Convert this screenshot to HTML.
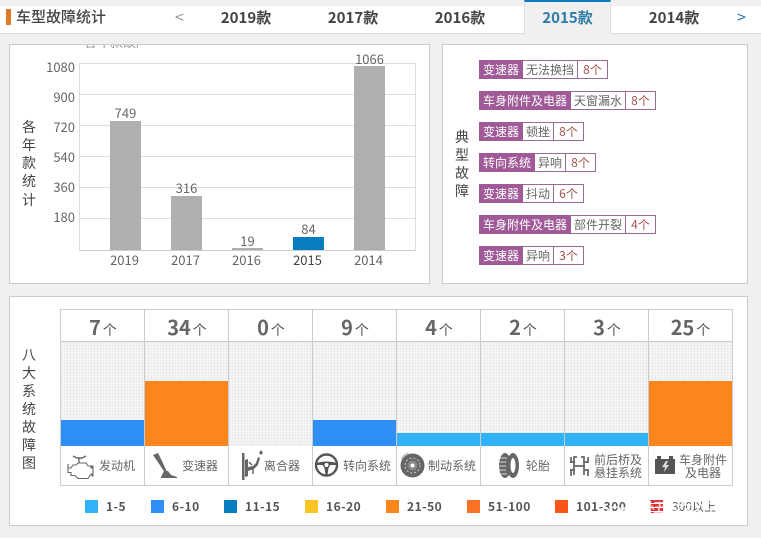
<!DOCTYPE html>
<html><head><meta charset="utf-8"><style>
html,body{margin:0;padding:0}
body{width:761px;height:541px;overflow:hidden;background:#f0f0f0;position:relative;font-family:"Noto Sans CJK SC","Liberation Sans",sans-serif;color:#555}
div,span.a{position:absolute;box-sizing:border-box}
.tab{top:6px;height:27px;line-height:23px;font-size:15px;font-weight:700;color:#444;text-align:center;width:86px}
.panel{background:#fff;border:1px solid #ccc}
.g{left:79px;width:337px;height:1px;background:#ddd}
.yl{left:35px;width:40px;text-align:right;font-size:13px;line-height:14px;color:#666}
.bar{width:31px;background:#b0aeb0}
.v{width:61px;text-align:center;font-size:13px;line-height:14px;color:#666}
.vt{font-size:14px;line-height:18px;width:16px;text-align:center;color:#444}
.tg{left:479px;height:19px;display:flex;font-size:12px;line-height:18px;white-space:nowrap;color:#666}
.tg span{box-sizing:border-box;display:block;height:19px;text-align:center;border:1px solid #9a6a94;border-left:0;background:#fff}
.tg span.p{background:#a05a98;color:#fff;border:0;line-height:19px}
.tg span.n{color:#a5504e}
.hc{top:309px;height:33px;width:85px;border:1px solid #ccc;border-right:0;background:#fff;text-align:center;font-size:20px;font-weight:700;line-height:33px;color:#666}
.hc i{font-style:normal;font-weight:400;font-size:14px;color:#555;margin-left:2px}
.cc{top:342px;height:104px;width:84px;border-left:1px solid #ccc;background-color:#f7f7f7;background-image:linear-gradient(#ececec 1px,transparent 1px),linear-gradient(90deg,#ececec 1px,transparent 1px);background-size:3px 3px}
.b{left:0;right:0;bottom:0}
.ic{top:446px;height:40px;width:85px;border:1px solid #ccc;border-top:0;border-right:0;background:#fff}
.il{font-size:12px;line-height:13px;color:#666;text-align:center;white-space:nowrap}
.sq{top:500px;width:13px;height:13px}
.lg{top:499px;font-size:12px;line-height:15px;font-weight:700;color:#555;letter-spacing:.5px;white-space:nowrap}
svg{position:absolute;overflow:visible}
</style></head><body>
<div style="left:0;top:6px;width:761px;height:28px;background:#fff;border-bottom:1px solid #ddd"></div>
<div style="left:6px;top:9px;width:5px;height:16px;background:#e07b28"></div>
<div style="left:16px;top:6px;font-size:15px;line-height:22px;font-weight:500;color:#444;white-space:nowrap">车型故障统计</div>
<div style="left:175px;top:5px;font-size:16px;line-height:22px;color:#999">&lt;</div>
<div class="tab" style="left:203px">2019款</div>
<div class="tab" style="left:310px">2017款</div>
<div class="tab" style="left:417px">2016款</div>
<div style="left:524px;top:0;width:87px;height:34px;background:#f0f0f0;border-left:1px solid #ddd;border-right:1px solid #ddd;border-top:2px solid #0a7cc0"></div>
<div class="tab" style="left:524px;color:#2d7ca8;width:87px">2015款</div>
<div class="tab" style="left:631px">2014款</div>
<div style="left:737px;top:5px;font-size:16px;line-height:22px;color:#2d7ca8">&gt;</div>

<div class="panel" style="left:9px;top:44px;width:421px;height:240px"></div>
<div class="panel" style="left:442px;top:44px;width:306px;height:240px"></div>
<div class="panel" style="left:9px;top:296px;width:739px;height:230px"></div>
<div style="left:84px;top:45px;width:56px;height:3px;overflow:hidden;color:#999;font-size:13px;line-height:3px;white-space:nowrap"><div style="left:0;top:-10px;line-height:14px">各年款故障</div></div>

<div class="vt" style="left:21px;top:118px">各</div>
<div class="vt" style="left:21px;top:136px">年</div>
<div class="vt" style="left:21px;top:154px">款</div>
<div class="vt" style="left:21px;top:172px">统</div>
<div class="vt" style="left:21px;top:191px">计</div>
<div class="yl" style="top:60px">1080</div>
<div class="yl" style="top:90px">900</div>
<div class="yl" style="top:120px">720</div>
<div class="yl" style="top:150px">540</div>
<div class="yl" style="top:180px">360</div>
<div class="yl" style="top:210px">180</div>
<div class="g" style="top:63px"></div><div class="g" style="top:94px"></div><div class="g" style="top:125px"></div><div class="g" style="top:156px"></div><div class="g" style="top:187px"></div><div class="g" style="top:218px"></div><div class="g" style="top:250px;background:#ccc"></div>
<div style="left:79px;top:63px;width:1px;height:188px;background:#ddd"></div>
<div style="left:415px;top:63px;width:1px;height:188px;background:#ddd"></div>
<div class="bar" style="left:110px;top:121px;height:129px"></div>
<div class="bar" style="left:171px;top:196px;height:54px"></div>
<div class="bar" style="left:232px;top:248px;height:2px"></div>
<div class="bar" style="left:293px;top:237px;height:13px;background:#0a7cc0"></div>
<div class="bar" style="left:354px;top:66px;height:184px"></div>
<div class="v" style="left:95px;top:106px">749</div>
<div class="v" style="left:156px;top:181px">316</div>
<div class="v" style="left:217px;top:234px">19</div>
<div class="v" style="left:278px;top:222px">84</div>
<div class="v" style="left:339px;top:52px">1066</div>
<div class="v" style="left:94px;top:253px">2019</div>
<div class="v" style="left:155px;top:253px">2017</div>
<div class="v" style="left:216px;top:253px">2016</div>
<div class="v" style="left:277px;top:253px;color:#444">2015</div>
<div class="v" style="left:338px;top:253px">2014</div>

<div class="vt" style="left:454px;top:128px">典</div>
<div class="vt" style="left:454px;top:146px">型</div>
<div class="vt" style="left:454px;top:164px">故</div>
<div class="vt" style="left:454px;top:182px">障</div>
<div class="tg" style="top:60px"><span class="p" style="width:44px">变速器</span><span style="width:55px">无法换挡</span><span class="n" style="width:30px">8个</span></div>
<div class="tg" style="top:91px"><span class="p" style="width:92px">车身附件及电器</span><span style="width:55px">天窗漏水</span><span class="n" style="width:30px">8个</span></div>
<div class="tg" style="top:122px"><span class="p" style="width:44px">变速器</span><span style="width:31px">顿挫</span><span class="n" style="width:30px">8个</span></div>
<div class="tg" style="top:153px"><span class="p" style="width:56px">转向系统</span><span style="width:31px">异响</span><span class="n" style="width:30px">8个</span></div>
<div class="tg" style="top:184px"><span class="p" style="width:44px">变速器</span><span style="width:31px">抖动</span><span class="n" style="width:30px">6个</span></div>
<div class="tg" style="top:215px"><span class="p" style="width:92px">车身附件及电器</span><span style="width:55px">部件开裂</span><span class="n" style="width:30px">4个</span></div>
<div class="tg" style="top:246px"><span class="p" style="width:44px">变速器</span><span style="width:31px">异响</span><span class="n" style="width:30px">3个</span></div>

<div class="vt" style="left:21px;top:346px">八</div>
<div class="vt" style="left:21px;top:364px">大</div>
<div class="vt" style="left:21px;top:382px">系</div>
<div class="vt" style="left:21px;top:400px">统</div>
<div class="vt" style="left:21px;top:418px">故</div>
<div class="vt" style="left:21px;top:436px">障</div>
<div class="vt" style="left:21px;top:454px">图</div>

<div class="hc" style="left:60px">7<i>个</i></div>
<div class="hc" style="left:144px">34<i>个</i></div>
<div class="hc" style="left:228px">0<i>个</i></div>
<div class="hc" style="left:312px">9<i>个</i></div>
<div class="hc" style="left:396px">4<i>个</i></div>
<div class="hc" style="left:480px">2<i>个</i></div>
<div class="hc" style="left:564px">3<i>个</i></div>
<div class="hc" style="left:648px;width:85px;border-right:1px solid #ccc">25<i>个</i></div>

<div class="cc" style="left:60px"><div class="b" style="height:26px;background:#2e8ff7"></div></div>
<div class="cc" style="left:144px"><div class="b" style="height:65px;background:#fc851e"></div></div>
<div class="cc" style="left:228px"></div>
<div class="cc" style="left:312px"><div class="b" style="height:26px;background:#2e8ff7"></div></div>
<div class="cc" style="left:396px"><div class="b" style="height:13px;background:#2fb2f7"></div></div>
<div class="cc" style="left:480px"><div class="b" style="height:13px;background:#2fb2f7"></div></div>
<div class="cc" style="left:564px"><div class="b" style="height:13px;background:#2fb2f7"></div></div>
<div class="cc" style="left:648px;width:85px;border-right:1px solid #ccc"><div class="b" style="height:65px;background:#fc851e"></div></div>

<div class="ic" style="left:60px"></div><div class="ic" style="left:144px"></div><div class="ic" style="left:228px"></div><div class="ic" style="left:312px"></div><div class="ic" style="left:396px"></div><div class="ic" style="left:480px"></div><div class="ic" style="left:564px"></div><div class="ic" style="left:648px;width:85px;border-right:1px solid #ccc"></div>

<svg style="left:0;top:0" width="761" height="541" viewBox="0 0 761 541">
<!-- engine -->
<path d="M68 464v9M68 468h3l2-3h3l2-2h8l2 3h3v2h1v-2h1v10h-1v-2h-1l-3 4.500H78l-3-3h-4v-3h-3" fill="none" stroke="#666" stroke-width="1.1"/>
<path d="M73 456l4 2h5l4-2M79 458v4.500" fill="none" stroke="#666" stroke-width="1.400"/>
<!-- gear -->
<path d="M153 455l5-2 4 8 5 11h-2.500l-6-9z" fill="#666"/>
<path d="M161 477l3-6h4l3 4 6 2v1h-16z" fill="#666"/>
<!-- clutch -->
<path d="M242 453h2.500v27H242zM245 460l3-1v17l-3 1zM248 467l5-1 3-3 2-6 2 1-2 7-4 4-6 2z" fill="#666"/>
<path d="M259 453l2-3 2 3-2 2z" fill="#666"/><path d="M249 462l3 3M253 474v-5" stroke="#666" stroke-width="1.500"/>
<!-- wheel -->
<circle cx="326.500" cy="465" r="10.500" fill="none" stroke="#555" stroke-width="2.400"/>
<path d="M316.500 463c6-2 14-2 20 0v2h-6l-2 3-1 7h-2l-1-7-2-3h-6z" fill="#555"/><circle cx="326.500" cy="465" r="2" fill="#fff"/>
<!-- brake -->
<circle cx="412.500" cy="465.500" r="12" fill="#666"/><circle cx="412.500" cy="465.500" r="7.500" fill="none" stroke="#ccc" stroke-width="1" stroke-dasharray="2 2"/><circle cx="412.500" cy="465.500" r="5" fill="#888"/><circle cx="412.500" cy="465.500" r="2" fill="#fff"/>
<path d="M401.500 459a12 12 0 0 1 7-6" stroke="#aaa" fill="none" stroke-width="1"/>
<!-- tire -->
<ellipse cx="505" cy="465.500" rx="6" ry="12.500" fill="#666"/><ellipse cx="513" cy="465.500" rx="6" ry="12.500" fill="#666"/><ellipse cx="513" cy="465.500" rx="2.500" ry="7.500" fill="#fff"/>
<path d="M500 458h7M499 462h7M499 466h7M499 470h7M501 474h6" stroke="#fff" stroke-width=".8"/>
<!-- axle -->
<path d="M571 457v6M571 469v7M570 462h5M570 470h5M574 466h11M577 457h-3v18M581 457h3v18M588 457v6M588 469v7M584 462h4M584 470h4" fill="none" stroke="#666" stroke-width="1.700"/>
<!-- battery -->
<path d="M655 459h20v15h-20z" fill="#555"/><path d="M657 456h4v3h-4zM669 456h4v3h-4z" fill="#555"/>
<path d="M666 461l-4 6h3l-1 5 5-7h-3l2-4z" fill="#ddd"/>
</svg>

<div class="il" style="left:99px;top:459px">发动机</div>
<div class="il" style="left:182px;top:459px">变速器</div>
<div class="il" style="left:264px;top:459px">离合器</div>
<div class="il" style="left:343px;top:459px">转向系统</div>
<div class="il" style="left:428px;top:459px">制动系统</div>
<div class="il" style="left:526px;top:459px">轮胎</div>
<div class="il" style="left:594px;top:453px">前后桥及<br>悬挂系统</div>
<div class="il" style="left:679px;top:453px">车身附件<br>及电器</div>

<div class="sq" style="left:85px;background:#2fb2f7"></div><div class="lg" style="left:106px">1-5</div>
<div class="sq" style="left:151px;background:#2e8ff7"></div><div class="lg" style="left:172px">6-10</div>
<div class="sq" style="left:224px;background:#0a7cc0"></div><div class="lg" style="left:245px">11-15</div>
<div class="sq" style="left:305px;background:#fbc526"></div><div class="lg" style="left:326px">16-20</div>
<div class="sq" style="left:386px;background:#fc851e"></div><div class="lg" style="left:407px">21-50</div>
<div class="sq" style="left:467px;background:#f97226"></div><div class="lg" style="left:488px">51-100</div>
<div class="sq" style="left:555px;background:#f95516"></div><div class="lg" style="left:576px">101-300</div>
<div class="sq" style="left:650px;background:repeating-linear-gradient(#dc2f3a 0 3px,#fff 3px 4px)"></div><div class="lg" style="left:672px;letter-spacing:0;font-weight:400">300以上</div>

<svg style="left:605px;top:500px" width="40" height="30" viewBox="0 0 40 30">
<ellipse cx="10" cy="14" rx="8" ry="7" fill="none" stroke="#fff" stroke-opacity=".8" stroke-width="2"/>
<ellipse cx="24" cy="14" rx="8" ry="7" fill="none" stroke="#fff" stroke-opacity=".8" stroke-width="2"/>
</svg>
<div style="left:645px;top:494px;font-size:25px;line-height:36px;color:rgba(255,255,255,.72);white-space:nowrap">悟空问答</div>
<div style="left:0;top:538px;width:761px;height:3px;background:#fff"></div>
</body></html>
